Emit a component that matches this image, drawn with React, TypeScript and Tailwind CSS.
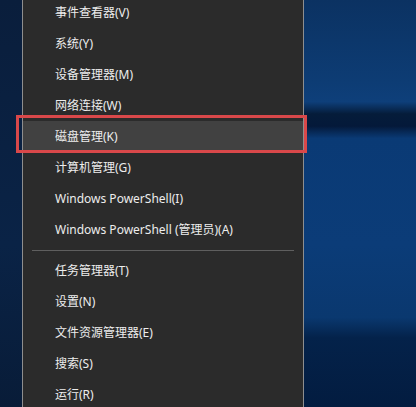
import React from 'react';

type Item = { label: string; active?: boolean } | { sep: true };

const items: Item[] = [
  { label: '事件查看器(V)' },
  { label: '系统(Y)' },
  { label: '设备管理器(M)' },
  { label: '网络连接(W)' },
  { label: '磁盘管理(K)', active: true },
  { label: '计算机管理(G)' },
  { label: 'Windows PowerShell(I)' },
  { label: 'Windows PowerShell (管理员)(A)' },
  { sep: true },
  { label: '任务管理器(T)' },
  { label: '设置(N)' },
  { label: '文件资源管理器(E)' },
  { label: '搜索(S)' },
  { label: '运行(R)' },
];

export default function App() {
  return (
    <div className="relative flex w-[416px] h-[407px] overflow-hidden bg-[#0a1f3d] font-['Noto_Sans','Noto_Sans_CJK_SC',sans-serif]">
      {/* left desktop strip */}
      <div className="w-[22px] shrink-0 bg-[linear-gradient(180deg,#0a1e3c_0%,#0a2346_60%,#081c38_100%)]" />

      {/* context menu */}
      <div className="w-[282px] shrink-0 bg-[#2b2b2b] border-x border-[#8e8e8e]">
        <div className="-mt-[3px] flex flex-col">
          {items.map((item, i) =>
            'sep' in item ? (
              <div key={i} className="h-[10px] flex items-center px-[9px]">
                <div className="h-px w-full bg-[#5f5f5f]" />
              </div>
            ) : (
              <div
                key={i}
                className={`h-[31px] flex items-center pl-[32px] text-[12px] text-[#ededed] ${item.active ? 'bg-[#414141]' : ''}`}
              >
                {item.label}
              </div>
            )
          )}
        </div>
      </div>

      {/* desktop wallpaper */}
      <div className="flex-1 bg-[linear-gradient(180deg,#0b3262_0%,#0d3c74_20%,#0e3f7a_25%,#051c3a_28%,#04193a_31%,#0a3a75_34%,#0b3c78_60%,#0a386f_78%,#04224a_83%,#031c40_100%)]" />

      {/* red highlight box */}
      <div className="absolute left-[16px] top-[115px] w-[291px] h-[38px] border-[3px] border-[#d9484a]" />
    </div>
  );
}
